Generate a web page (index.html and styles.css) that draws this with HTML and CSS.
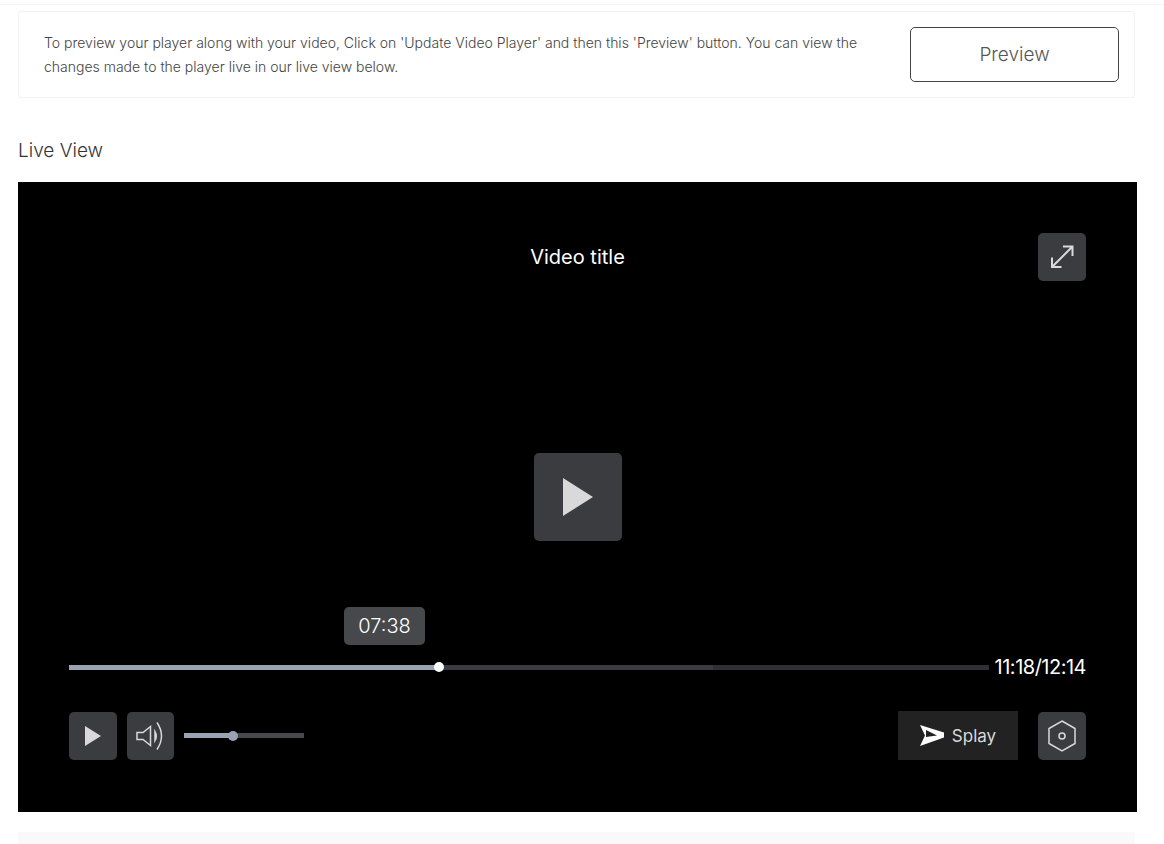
FILE: index.html
```html
<!DOCTYPE html>
<html lang="en">
<head>
<meta charset="UTF-8" />
<meta name="viewport" content="width=device-width, initial-scale=1.0">
<title>Video Player</title>
<link rel="stylesheet" href="styles.css">
</head>
<body>
<div class="topline"></div>
<div class="notice">
  <p>To preview your player along with your video, Click on 'Update Video Player' and then this 'Preview' button. You can view the changes made to the player live in our live view below.</p>
  <button class="preview-btn">Preview</button>
</div>

<h2 class="section-title">Live View</h2>

<div class="player">
  <div class="player-top">
    <span></span>
    <div class="video-title">Video title</div>
    <button class="icon-btn expand">
      <svg width="24" height="24" viewBox="0 0 24 24" fill="none" stroke="#d9d9d9" stroke-width="2">
        <path d="M13 1.5h9.500v9.500M22 2L2 22M2 12.500v9.500h9.500"/>
      </svg>
    </button>
  </div>

  <button class="big-play">
    <svg width="32" height="40" viewBox="0 0 32 40"><path d="M1 1l30 19L1 39z" fill="#d9d9d9"/></svg>
  </button>

  <div class="player-bottom">
    <div class="timeline">
      <div class="track">
        <div class="track-buffer"></div>
        <div class="track-played"></div>
        <div class="track-knob"></div>
        <div class="time-tip">07:38</div>
      </div>
      <div class="time">11:18/12:14</div>
    </div>
    <div class="controls">
      <button class="icon-btn">
        <svg width="18" height="20" viewBox="0 0 18 20"><path d="M1 0l16 10L1 20z" fill="#d9d9d9"/></svg>
      </button>
      <button class="icon-btn volume">
        <svg width="32" height="30" viewBox="0 0 32 30" fill="none" stroke="#d9d9d9" stroke-width="1.500">
          <path d="M2 11.500h6L15.500 5.500v19L8 18.500H2z"/>
          <path d="M20 10.500q2.500 4.500 0 9z" fill="#d9d9d9"/>
          <path d="M22 1.500q9 13.500 0 27"/>
        </svg>
      </button>
      <div class="volume-slider">
        <div class="volume-level"></div>
        <div class="volume-knob"></div>
      </div>
      <div class="spacer"></div>
      <div class="splay">
        <svg width="24" height="21" viewBox="0 0 24 21"><path d="M0 0l24 7.500v5L0 21l5-10.500z" fill="#fff"/><path d="M6 5l11 5.500L6 12z" fill="#222"/></svg>
        <span>Splay</span>
      </div>
      <button class="icon-btn settings">
        <svg width="28" height="32" viewBox="0 0 28 32" fill="none" stroke="#d9d9d9" stroke-width="1.500">
          <path d="M14 1l13 7.500v15L14 31 1 23.500v-15z"/>
          <circle cx="14" cy="16" r="3"/>
        </svg>
      </button>
    </div>
  </div>
</div>

<div class="next-panel"></div>
</body>
</html>
```

FILE: styles.css
```css
html, body {
  height: 844px;
  overflow: hidden;
}

body {
  margin: 0;
  padding: 0 27px 0 18px;
  background: #fff;
  font-family: "Inter", "Liberation Sans", sans-serif;
  font-weight: 300;
  color: #333;
  position: relative;
}

button {
  font-family: inherit;
  cursor: pointer;
}

.topline {
  height: 1px;
  margin: 0 -27px 6px -18px;
  padding-top: 4px;
  box-sizing: content-box;
  border-bottom: 1px solid #f4f4f4;
  height: 0;
}

.notice {
  display: flex;
  justify-content: space-between;
  align-items: center;
  width: 1117px;
  height: 87px;
  box-sizing: border-box;
  margin-right: -2px;
  padding: 0 15px 0 25px;
  border: 1px solid #f2f2f2;
  border-radius: 3px;
}

.notice p {
  margin: 0;
  width: 820px;
  font-size: 14px;
  line-height: 24px;
  color: #444;
}

.preview-btn {
  width: 209px;
  height: 55px;
  background: #fff;
  border: 1px solid #444;
  border-radius: 5px;
  font-size: 19px;
  font-weight: 300;
  color: #555;
}

.section-title {
  margin: 40px 0 19px;
  font-size: 19px;
  line-height: 25px;
  font-weight: 300;
  color: #333;
}

.player {
  width: 1119px;
  height: 630px;
  box-sizing: border-box;
  padding: 51px;
  padding-bottom: 52px;
  background: #000;
  display: grid;
  grid-template-rows: 1fr auto 1fr;
  justify-items: center;
  align-items: center;
}

.player-top {
  width: 100%;
  align-self: start;
  display: grid;
  grid-template-columns: 1fr auto 1fr;
  align-items: center;
}

.video-title {
  font-size: 20px;
  font-weight: 400;
  color: #fff;
}

.icon-btn {
  width: 48px;
  height: 48px;
  padding: 0;
  border: none;
  border-radius: 5px;
  background: #3b3c40;
  display: flex;
  align-items: center;
  justify-content: center;
}

.expand {
  justify-self: end;
}

.big-play {
  width: 88px;
  height: 88px;
  padding: 0;
  border: none;
  border-radius: 5px;
  background: #3b3c40;
  display: flex;
  align-items: center;
  justify-content: center;
}

.player-bottom {
  width: 100%;
  align-self: end;
}

.timeline {
  display: flex;
  align-items: center;
  gap: 6px;
  margin-bottom: 32px;
}

.track {
  flex: 1;
  height: 5px;
  background: #2f3034;
  position: relative;
}

.track-buffer {
  position: absolute;
  left: 0;
  top: 0;
  bottom: 0;
  width: 70%;
  background: #3b3c40;
}

.track-played {
  position: absolute;
  left: 0;
  top: 0;
  bottom: 0;
  width: 370px;
  background: #9aa3b2;
}

.track-knob {
  position: absolute;
  left: 365px;
  top: -3px;
  width: 10px;
  height: 10px;
  border-radius: 50%;
  background: #fff;
}

.time-tip {
  position: absolute;
  left: 275px;
  top: -58px;
  width: 81px;
  height: 38px;
  border-radius: 5px;
  background: #47484c;
  color: #fff;
  font-size: 20px;
  line-height: 38px;
  text-align: center;
}

.time {
  font-size: 20px;
  line-height: 24px;
  font-weight: 400;
  letter-spacing: -0.5px;
  color: #fff;
}

.controls {
  display: flex;
  align-items: center;
}

.controls .volume {
  width: 47px;
  margin-left: 10px;
}

.volume-slider {
  width: 120px;
  height: 5px;
  margin-left: 10px;
  background: #47484c;
  position: relative;
}

.volume-level {
  width: 49px;
  height: 100%;
  background: #9aa3b2;
}

.volume-knob {
  position: absolute;
  left: 44px;
  top: -2.500px;
  width: 10px;
  height: 10px;
  border-radius: 50%;
  background: #9aa3b2;
}

.spacer {
  flex: 1;
}

.splay {
  width: 120px;
  height: 49px;
  margin-right: 20px;
  background: #222;
  display: flex;
  align-items: center;
  justify-content: center;
  gap: 8px;
  color: #d9d9d9;
  font-size: 17px;
  font-weight: 400;
}

.next-panel {
  width: 1117px;
  height: 12px;
  margin-top: 20px;
  background: #f9f9f9;
}
```
